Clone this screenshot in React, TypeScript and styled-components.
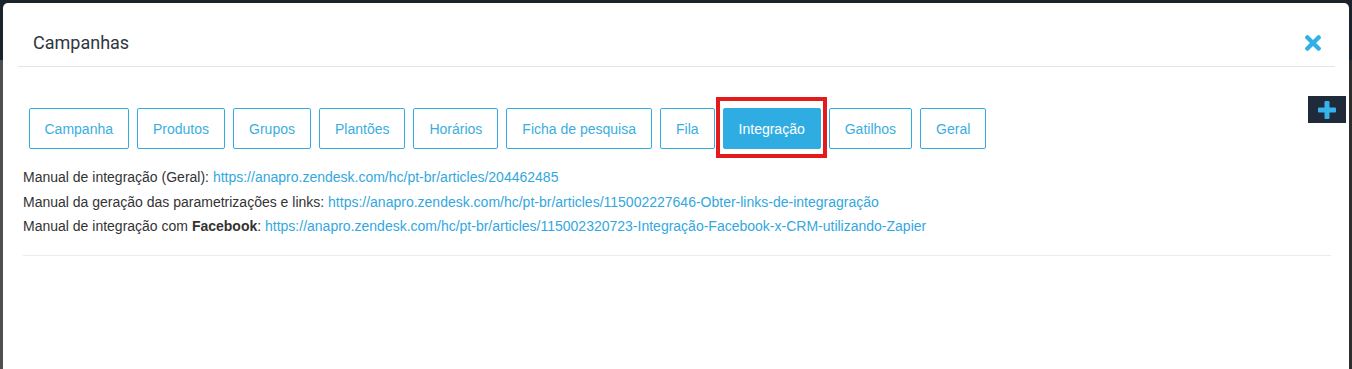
import styled, { createGlobalStyle } from "styled-components";

const GlobalStyle = createGlobalStyle`
  html, body {
    margin: 0;
    padding: 0;
  }
  body {
    width: 1352px;
    height: 369px;
    overflow: hidden;
    font-family: "Liberation Sans", Arial, sans-serif;
    background:
      linear-gradient(#1b232c 0 60px, transparent 60px),
      linear-gradient(90deg, #4f4f4f 0 3px, #1b232c 3px 1349px, #2e2e2e 1349px);
  }
`;

const Modal = styled.div`
  position: relative;
  box-sizing: border-box;
  margin: 3px 0 0 3px;
  width: 1346px;
  height: 366px;
  background: #fff;
  border-radius: 5px 5px 0 0;
`;

const Header = styled.div`
  display: flex;
  align-items: center;
  justify-content: space-between;
  margin: 0 14px 0 15px;
  padding: 30px 14px 13px 15px;
  border-bottom: 1px solid #e5e5e5;
`;

const Title = styled.h4`
  margin: 0;
  font-family: Roboto, "Liberation Sans", sans-serif;
  font-size: 18px;
  font-weight: 400;
  line-height: 20px;
  color: #2f3640;
`;

const CloseButton = styled.button`
  display: flex;
  padding: 0;
  border: 0;
  background: none;
  cursor: pointer;
`;

const AddButton = styled.button`
  position: absolute;
  top: 93px;
  right: 3px;
  width: 38px;
  height: 27px;
  display: flex;
  align-items: center;
  justify-content: center;
  padding: 0;
  border: 0;
  background: #1f2b3a;
  cursor: pointer;
`;

const Body = styled.div`
  padding: 41px 18px 0 20px;
`;

const Tabs = styled.div`
  display: flex;
  gap: 8px;
  padding-left: 5.5px;
`;

const Tab = styled.button<{ active?: boolean }>`
  position: relative;
  height: 41px;
  padding: 0 15px;
  border: 1px solid #33ace2;
  border-radius: 2px;
  background: ${({ active }) => (active ? "#2fade3" : "#fff")};
  color: ${({ active }) => (active ? "#fff" : "#3aaee0")};
  font-family: "Liberation Sans", Arial, sans-serif;
  font-size: 14px;
  line-height: 20px;
  cursor: pointer;
  ${({ active }) =>
    active &&
    `
    &::after {
      content: "";
      position: absolute;
      top: -12px;
      bottom: -10px;
      left: -8px;
      right: -7px;
      border: 4px solid #e31b1d;
    }
  `}
`;

const Links = styled.div`
  margin-top: 16px;
  padding-bottom: 16px;
  border-bottom: 1px solid #ececec;
`;

const Line = styled.p`
  margin: 0;
  font-size: 14px;
  line-height: 24.5px;
  color: #333;
  white-space: nowrap;
`;

const Link = styled.a`
  color: #33a7dd;
  text-decoration: none;
`;

const tabs = [
  "Campanha",
  "Produtos",
  "Grupos",
  "Plantões",
  "Horários",
  "Ficha de pesquisa",
  "Fila",
  "Integração",
  "Gatilhos",
  "Geral",
];

const manuals = [
  {
    label: <>Manual de integração (Geral): </>,
    url: "https://anapro.zendesk.com/hc/pt-br/articles/204462485",
  },
  {
    label: <>Manual da geração das parametrizações e links: </>,
    url: "https://anapro.zendesk.com/hc/pt-br/articles/115002227646-Obter-links-de-integragração",
  },
  {
    label: (
      <>
        Manual de integração com <b>Facebook</b>:{" "}
      </>
    ),
    url: "https://anapro.zendesk.com/hc/pt-br/articles/115002320723-Integração-Facebook-x-CRM-utilizando-Zapier",
  },
];

function App() {
  return (
    <>
      <GlobalStyle />
      <Modal>
        <Header>
          <Title>Campanhas</Title>
          <CloseButton aria-label="Fechar">
            <svg width="16" height="16" viewBox="0 80 352 352">
              <path
                fill="#2fb0e6"
                d="M242.72 256l100.07-100.07c12.28-12.28 12.28-32.19 0-44.48l-22.24-22.24c-12.28-12.28-32.19-12.28-44.48 0L176 189.28 75.93 89.21c-12.28-12.28-32.19-12.28-44.48 0L9.21 111.45c-12.28 12.28-12.28 32.19 0 44.48L109.28 256 9.21 356.07c-12.28 12.28-12.28 32.19 0 44.48l22.24 22.24c12.28 12.28 32.2 12.28 44.48 0L176 322.72l100.07 100.07c12.28 12.28 32.2 12.28 44.48 0l22.24-22.24c12.28-12.28 12.28-32.19 0-44.48L242.72 256z"
              />
            </svg>
          </CloseButton>
        </Header>
        <AddButton aria-label="Adicionar">
          <svg width="18" height="18" viewBox="0 0 18 18">
            <rect x="6.5" y="0" width="5" height="18" rx="1" fill="#35b3ea" />
            <rect x="0" y="6.5" width="18" height="5" rx="1" fill="#35b3ea" />
          </svg>
        </AddButton>
        <Body>
          <Tabs>
            {tabs.map((t) => (
              <Tab key={t} active={t === "Integração"}>
                {t}
              </Tab>
            ))}
          </Tabs>
          <Links>
            {manuals.map((m) => (
              <Line key={m.url}>
                {m.label}
                <Link href="#">{m.url}</Link>
              </Line>
            ))}
          </Links>
        </Body>
      </Modal>
    </>
  );
}

export default App;
